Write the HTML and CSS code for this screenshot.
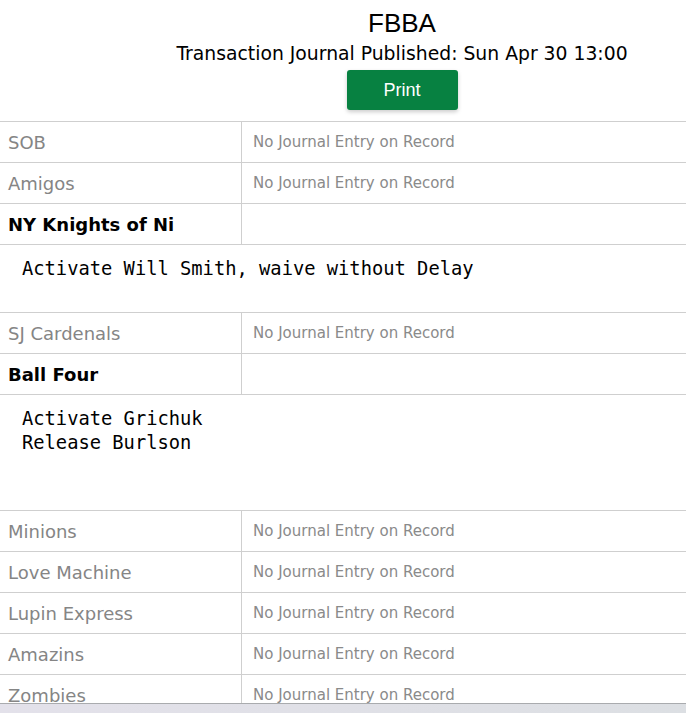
FILE: index.html
```html
<!DOCTYPE html>
<html lang="en">
<head>
    <meta charset="UTF-8">
    <meta name="viewport" content="width=device-width, initial-scale=1.0">
    <title>FBBA Transaction Journal</title>
    <link rel="stylesheet" href="styles.css">
</head>
<body>
    <div class="header">
        <div class="title">FBBA</div>
        <div class="published">Transaction Journal Published: Sun Apr 30 13:00</div>
        <button class="print-btn">Print</button>
    </div>

    <table class="journal">
        <tr><td class="team">SOB</td><td class="none">No Journal Entry on Record</td></tr>
        <tr><td class="team">Amigos</td><td class="none">No Journal Entry on Record</td></tr>
        <tr><td class="team active">NY Knights of Ni</td><td></td></tr>
        <tr><td colspan="2" class="entry"><pre>Activate Will Smith, waive without Delay

</pre></td></tr>
        <tr><td class="team">SJ Cardenals</td><td class="none">No Journal Entry on Record</td></tr>
        <tr><td class="team active">Ball Four</td><td></td></tr>
        <tr><td colspan="2" class="entry"><pre>Activate Grichuk
Release Burlson


</pre></td></tr>
        <tr><td class="team">Minions</td><td class="none">No Journal Entry on Record</td></tr>
        <tr><td class="team">Love Machine</td><td class="none">No Journal Entry on Record</td></tr>
        <tr><td class="team">Lupin Express</td><td class="none">No Journal Entry on Record</td></tr>
        <tr><td class="team">Amazins</td><td class="none">No Journal Entry on Record</td></tr>
        <tr><td class="team">Zombies</td><td class="none">No Journal Entry on Record</td></tr>
    </table>

    <div class="taskbar"></div>
</body>
</html>
```

FILE: styles.css
```css
body {
    margin: 0;
    background: white;
    color: #000;
    font-family: "DejaVu Sans", Verdana, sans-serif;
}
.header {
    padding: 8px 0 0 118px;
    text-align: center;
}
.title {
    font-family: "Liberation Sans", Arial, sans-serif;
    font-size: 26px;
    line-height: 30px;
}
.published {
    font-size: 18.8px;
    line-height: 24px;
    margin-top: 4px;
}
.print-btn {
    margin: 4px 0 11px;
    width: 111px;
    height: 40px;
    border: none;
    border-radius: 3px;
    background: #078141;
    color: white;
    font-family: "Liberation Sans", Arial, sans-serif;
    font-size: 18px;
    box-shadow: 0 2px 4px rgba(0,0,0,0.2);
}
.journal {
    width: 100%;
    border-collapse: collapse;
}
.journal td {
    border-top: 1px solid #cfcfcf;
    border-bottom: 1px solid #cfcfcf;
    height: 40px;
    padding: 0 8px;
}
.journal td.team {
    width: 225px;
    border-right: 1px solid #cfcfcf;
    font-size: 18px;
    color: #858585;
}
.journal td.active {
    color: #000;
    font-weight: bold;
}
.journal td.none {
    padding-left: 11px;
    font-size: 15px;
    color: #8a8a8a;
}
.journal td.entry {
    padding: 12px 22px 7px;
    height: auto;
}
.entry pre {
    margin: 0;
    font-family: "DejaVu Sans Mono", Consolas, monospace;
    font-size: 18.75px;
    line-height: 24px;
}
.taskbar {
    position: fixed;
    left: 0;
    right: 0;
    bottom: 0;
    height: 9px;
    border-top: 1px solid #a9abae;
    background: linear-gradient(90deg, #e3e1ea, #dcdfe3);
}
```
